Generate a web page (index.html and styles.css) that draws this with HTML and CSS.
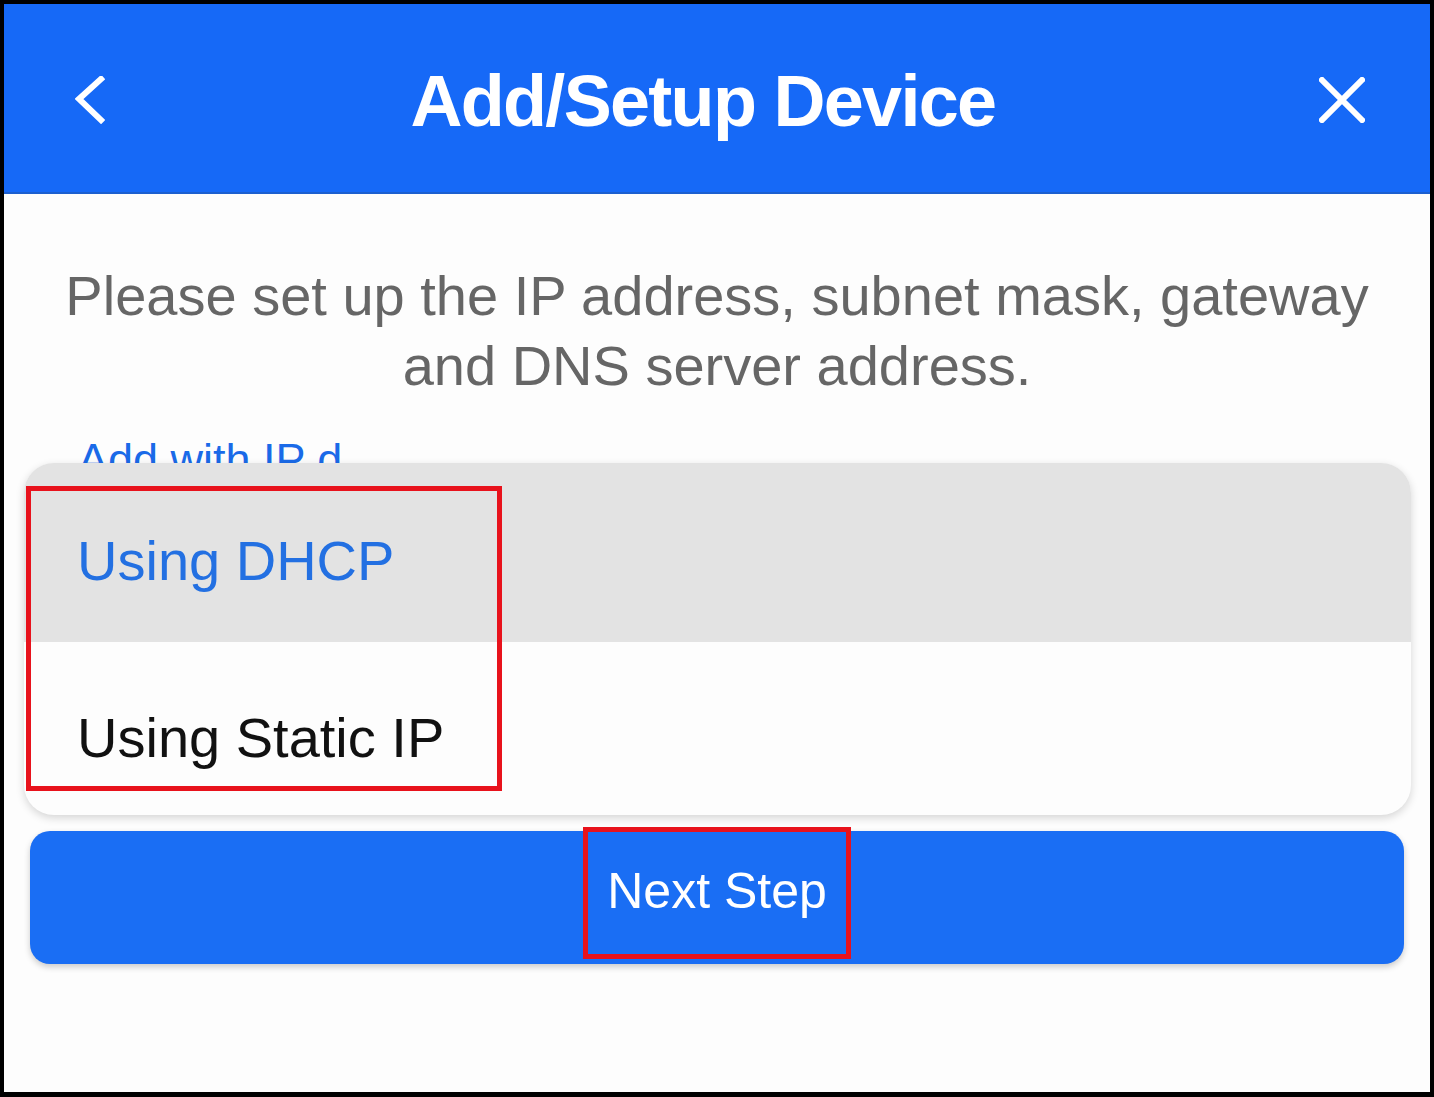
FILE: index.html
```html
<!DOCTYPE html>
<html lang="en">
<head>
<meta charset="utf-8">
<title>Add/Setup Device</title>
<link rel="stylesheet" href="styles.css">
</head>
<body>
<div class="frame">
  <header class="topbar">
    <button class="icon-btn back" aria-label="Back">
      <svg width="30" height="48" viewBox="0 0 30 48"><polyline points="26,3 4,23 26,44" fill="none" stroke="#fff" stroke-width="6" stroke-linecap="square" stroke-linejoin="miter"/></svg>
    </button>
    <h1 class="title">Add/Setup Device</h1>
    <button class="icon-btn close" aria-label="Close">
      <svg width="46" height="46" viewBox="0 0 46 46"><path d="M3 3 L43 43 M43 3 L3 43" fill="none" stroke="#fff" stroke-width="6" stroke-linecap="square"/></svg>
    </button>
  </header>

  <main class="content">
    <p class="desc">Please set up the IP address, subnet mask, gateway and DNS server address.</p>
    <div class="link">Add with IP d</div>

    <div class="sheet">
      <div class="option option-active">Using DHCP</div>
      <div class="option">Using Static IP</div>
      <div class="mark mark-options"></div>
    </div>

    <button class="next">
      Next Step
      <span class="mark mark-next"></span>
    </button>
  </main>
</div>
</body>
</html>
```

FILE: styles.css
```css
* { box-sizing: border-box; }

html, body {
  margin: 0;
  padding: 0;
  background: #000;
}

body {
  font-family: "Liberation Sans", Arial, Helvetica, sans-serif;
}

.frame {
  width: 1434px;
  height: 1097px;
  border: 4px solid #000;
  border-bottom-width: 5px;
  background: #fdfdfd;
  overflow: hidden;
  display: flex;
  flex-direction: column;
}

.topbar {
  height: 190px;
  background: #1669f7;
  border-bottom: 2px solid #1c5fcf;
  display: flex;
  align-items: center;
  padding: 0 65px 0 71px;
  flex-shrink: 0;
}

.icon-btn {
  background: none;
  border: 0;
  padding: 0;
  margin: 0;
  display: flex;
  align-items: center;
  justify-content: center;
  cursor: pointer;
}

.icon-btn.back { width: 30px; height: 48px; margin-top: 4px; }
.icon-btn.close { width: 46px; height: 46px; margin-top: 4px; }

.title {
  flex: 1;
  margin: 0;
  text-align: center;
  color: #fff;
  font-weight: 700;
  font-size: 72px;
  letter-spacing: -1.7px;
  line-height: 1;
  padding-right: 18px;
  padding-top: 6px;
}

.content {
  display: flex;
  flex-direction: column;
}

.desc {
  margin: 67px 40px 0;
  text-align: center;
  color: #666;
  font-size: 56px;
  line-height: 70px;
}

.link {
  margin: 36px 0 0 74px;
  font-size: 45px;
  line-height: 45px;
  color: #1a6ae8;
  height: 45px;
  white-space: nowrap;
}

.sheet {
  position: relative;
  z-index: 1;
  margin: -19px 19px 0 20px;
  border-radius: 30px;
  background: #fdfdfd;
  box-shadow: 0 3px 8px rgba(0, 0, 0, 0.16);
}

.option {
  padding: 67px 0 48px 53px;
  font-size: 56px;
  line-height: 58px;
  color: #111;
  height: 173px;
}

.option-active {
  background: #e3e3e3;
  color: #2370e2;
  border-radius: 30px 30px 0 0;
  padding-top: 69px;
  height: 179px;
}

.mark {
  position: absolute;
  border: 5px solid #e8121c;
  pointer-events: none;
}

.mark-options {
  left: 2px;
  top: 23px;
  width: 476px;
  height: 305px;
}

.next {
  position: relative;
  margin: 16px 26px 0;
  height: 133px;
  border: 0;
  border-radius: 20px;
  background: #1a6ef4;
  box-shadow: 0 3px 6px rgba(0, 0, 0, 0.2);
  color: #fff;
  font-family: "Liberation Sans", Arial, Helvetica, sans-serif;
  font-size: 50px;
  line-height: 50px;
  padding: 0 0 14px;
  text-align: center;
  display: block;
}

.mark-next {
  left: calc(50% - 134px);
  top: -4px;
  width: 268px;
  height: 132px;
}
```
